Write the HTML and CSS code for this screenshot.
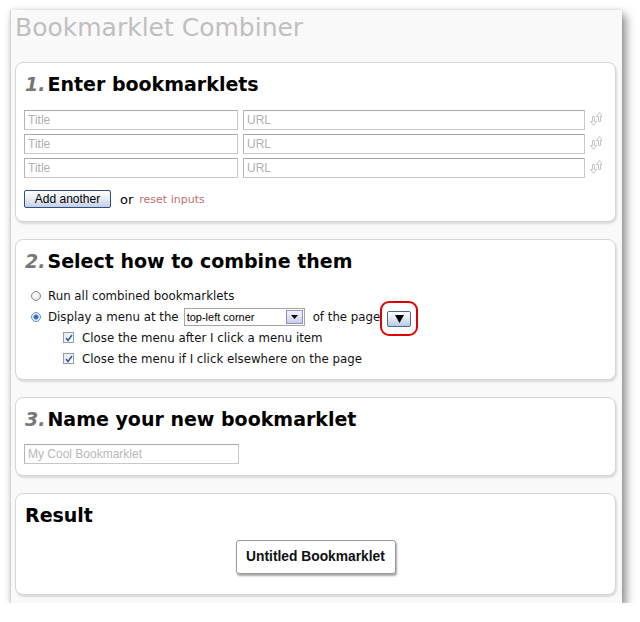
FILE: index.html
```html
<!DOCTYPE html>
<html>
<head>
<meta charset="utf-8">
<link rel="stylesheet" href="styles.css">
</head>
<body>
<div class="window">
  <h1 class="title">Bookmarklet Combiner</h1>

  <section class="card">
    <h2 class="heading"><span class="num">1.</span>Enter bookmarklets</h2>
    <div class="rows">
      <div class="row">
        <div class="field title-field">Title</div>
        <div class="field url-field">URL</div>
        <svg class="sort" width="12" height="16" viewBox="0 0 12 16"><path d="M2.5 5.5v5h-2l3 4 3-4h-2v-5z" fill="none" stroke="#c4c4c4"/><path d="M8.5 10.5v-5h-2l3-4 3 4h-2v5z" fill="none" stroke="#c4c4c4"/></svg>
      </div>
      <div class="row">
        <div class="field title-field">Title</div>
        <div class="field url-field">URL</div>
        <svg class="sort" width="12" height="16" viewBox="0 0 12 16"><path d="M2.5 5.5v5h-2l3 4 3-4h-2v-5z" fill="none" stroke="#c4c4c4"/><path d="M8.5 10.5v-5h-2l3-4 3 4h-2v5z" fill="none" stroke="#c4c4c4"/></svg>
      </div>
      <div class="row">
        <div class="field title-field">Title</div>
        <div class="field url-field">URL</div>
        <svg class="sort" width="12" height="16" viewBox="0 0 12 16"><path d="M2.5 5.5v5h-2l3 4 3-4h-2v-5z" fill="none" stroke="#c4c4c4"/><path d="M8.5 10.5v-5h-2l3-4 3 4h-2v5z" fill="none" stroke="#c4c4c4"/></svg>
      </div>
    </div>
    <div class="actions">
      <span class="btn">Add another</span>
      <span class="or">or</span>
      <span class="reset">reset inputs</span>
    </div>
  </section>

  <section class="card card-options">
    <h2 class="heading"><span class="num">2.</span>Select how to combine them</h2>
    <div class="options">
      <div class="opt">
        <span class="radio"></span>
        <span class="label">Run all combined bookmarklets</span>
      </div>
      <div class="opt">
        <span class="radio on"></span>
        <span class="label">Display a menu at the</span>
        <span class="select"><span class="sel-text">top-left corner</span><span class="sel-btn"><svg width="7" height="4" viewBox="0 0 7 4"><path d="M0 0h7L3.5 4z" fill="#000"/></svg></span></span>
        <span class="label">of the page</span>
        <span class="mark"><span class="mini-btn"><svg width="9" height="8" viewBox="0 0 9 8"><path d="M0 0h9L4.5 8z" fill="#000"/></svg></span></span>
      </div>
      <div class="opt sub">
        <span class="check"><svg width="8" height="8" viewBox="0 0 8 8"><path d="M1 4l2 2.5L7 1" fill="none" stroke="#2a55a8" stroke-width="1.4"/></svg></span>
        <span class="label">Close the menu after I click a menu item</span>
      </div>
      <div class="opt sub">
        <span class="check"><svg width="8" height="8" viewBox="0 0 8 8"><path d="M1 4l2 2.5L7 1" fill="none" stroke="#2a55a8" stroke-width="1.4"/></svg></span>
        <span class="label">Close the menu if I click elsewhere on the page</span>
      </div>
    </div>
  </section>

  <section class="card card-name">
    <h2 class="heading"><span class="num">3.</span>Name your new bookmarklet</h2>
    <div class="field name-field">My Cool Bookmarklet</div>
  </section>

  <section class="card result">
    <h2 class="heading">Result</h2>
    <div class="result-row">
      <span class="result-btn">Untitled Bookmarklet</span>
    </div>
  </section>
</div>
</body>
</html>
```

FILE: styles.css
```css
html, body {
  margin: 0;
  padding: 0;
  background: #ffffff;
}

body {
  padding: 10px 0 0 10px;
  font-family: "DejaVu Sans", Verdana, sans-serif;
}

.window {
  width: 611px;
  background: #f9f9f9;
  border-left: 1px solid #d4d4d4;
  box-shadow: 4px 5px 9px rgba(0, 0, 0, 0.45), 0 -1px 4px rgba(0, 0, 0, 0.08);
  padding: 4px 0 8px 0;
}

.title {
  margin: 0 0 20px 4px;
  font-size: 25px;
  line-height: 28px;
  font-weight: normal;
  color: #bfbfbf;
}

.card {
  margin: 0 0 17px 4px;
  width: 582px;
  background: #ffffff;
  border: 1px solid #d6d6d6;
  border-radius: 8px;
  box-shadow: 1px 2px 2px rgba(0, 0, 0, 0.12);
  padding: 10px 9px 13px 8px;
}

.card:last-child {
  margin-bottom: 0;
}

.heading {
  margin: 0;
  font-size: 19px;
  line-height: 23px;
  font-weight: bold;
  color: #000;
  padding-left: 1px;
}

.num {
  color: #777;
  font-style: italic;
  margin-right: 2px;
}

.rows {
  margin-top: 14px;
  display: flex;
  flex-direction: column;
  gap: 4px;
}

.row {
  display: flex;
  align-items: center;
  gap: 5px;
}

.field {
  box-sizing: border-box;
  height: 20px;
  border: 1px solid #c8c8c8;
  border-top-color: #a9a9a9;
  border-left-color: #b4b4b4;
  background: #fff;
  font-family: "Liberation Sans", Arial, sans-serif;
  font-size: 12px;
  line-height: 18px;
  color: #b0b0b0;
  padding-left: 3px;
}

.title-field {
  width: 214px;
}

.url-field {
  width: 342px;
}

.sort {
  margin-top: -2px;
}

.actions {
  margin-top: 12px;
  display: flex;
  align-items: center;
  height: 18px;
}

.btn {
  box-sizing: border-box;
  width: 87px;
  height: 18px;
  border: 1px solid #2f4f80;
  border-radius: 2px;
  background: linear-gradient(#ffffff, #e9eef6 45%, #c3d0e4);
  font-family: "Liberation Sans", Arial, sans-serif;
  font-size: 12px;
  line-height: 16px;
  text-align: center;
  color: #000;
}

.or {
  margin-left: 9px;
  font-size: 13px;
  color: #000;
}

.reset {
  margin-left: 6px;
  font-size: 11px;
  color: #c0706e;
}

.options {
  margin-top: 12px;
  display: flex;
  flex-direction: column;
}

.opt {
  height: 21px;
  display: flex;
  align-items: center;
  font-size: 11.8px;
  color: #111;
}

.opt.sub {
  padding-left: 39px;
}

.radio {
  box-sizing: border-box;
  width: 10px;
  height: 10px;
  margin-left: 7px;
  margin-right: 7px;
  border-radius: 50%;
  border: 1px solid #8a8a8a;
  background: radial-gradient(circle at 40% 40%, #ffffff, #dcdcdc);
}

.radio.on {
  border-color: #6b8fb8;
  background: radial-gradient(circle, #2a5db0 0, #3b7fd6 2px, #dfe9f6 3px, #ffffff 5px);
}

.check {
  box-sizing: border-box;
  width: 11px;
  height: 11px;
  margin-right: 8px;
  border: 1px solid #8e9fb4;
  background: linear-gradient(135deg, #e8e8e8, #ffffff);
  display: flex;
  align-items: center;
  justify-content: center;
}

.select {
  box-sizing: border-box;
  margin-left: 5px;
  margin-right: 8px;
  width: 121px;
  height: 18px;
  border: 1px solid #a5a5a5;
  background: #fff;
  display: flex;
  align-items: center;
  justify-content: space-between;
  padding: 0 1px 0 2px;
}

.sel-text {
  font-family: "Liberation Sans", Arial, sans-serif;
  font-size: 11px;
  color: #000;
}

.sel-btn {
  box-sizing: border-box;
  width: 17px;
  height: 14px;
  border: 1px solid #8f8fd0;
  background: linear-gradient(#f4f4fc, #c9cdee);
  display: flex;
  align-items: center;
  justify-content: center;
}

.mark {
  margin-left: 0;
  box-sizing: border-box;
  width: 38px;
  height: 35px;
  margin-top: 2px;
  margin-bottom: -2px;
  border: 2px solid #e00000;
  border-radius: 9px;
  display: flex;
  align-items: center;
  justify-content: center;
  margin-right: -40px;
}

.mini-btn {
  box-sizing: border-box;
  width: 24px;
  height: 16px;
  border: 1px solid #4a6a9a;
  border-radius: 2px;
  background: linear-gradient(#ffffff, #dfe6f2 50%, #b9c8e0);
  display: flex;
  align-items: center;
  justify-content: center;
}

.card-options {
  padding-bottom: 10px;
}

.card-name {
  padding-bottom: 11px;
}

.name-field {
  margin-top: 13px;
  width: 215px;
  color: #b8b8b8;
}

.result {
  padding-bottom: 20px;
}

.result-row {
  margin-top: 13px;
  display: flex;
  justify-content: center;
}

.result-btn {
  box-sizing: border-box;
  width: 160px;
  height: 34px;
  border: 1px solid #9a9a9a;
  border-radius: 3px;
  background: #fff;
  box-shadow: 1px 2px 2px rgba(0, 0, 0, 0.35);
  font-family: "Liberation Sans", Arial, sans-serif;
  font-weight: bold;
  font-size: 13.8px;
  line-height: 32px;
  text-align: center;
  color: #111;
  margin-left: 1px;
}
```
